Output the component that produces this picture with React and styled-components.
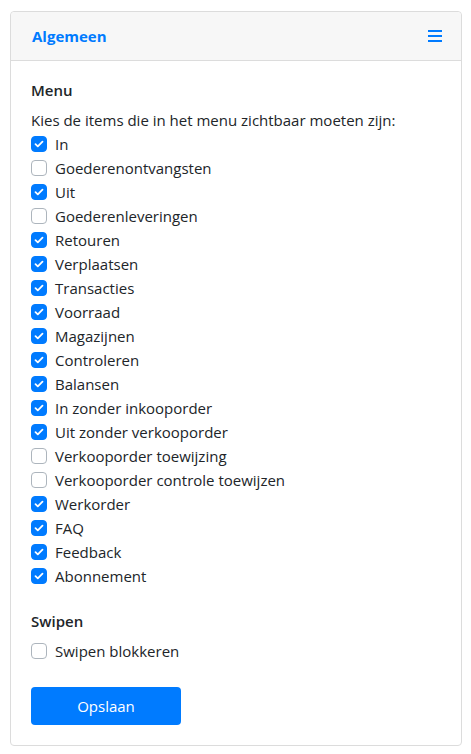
import styled, { createGlobalStyle } from "styled-components";

const GlobalStyle = createGlobalStyle`
    body {
        margin: 0;
        background: #fff;
        font-family: "Open Sans", "Liberation Sans", sans-serif;
        font-size: 15px;
        line-height: 24px;
        color: #212529;
    }
    * {
        box-sizing: border-box;
    }
`;

const Card = styled.div`
    margin: 11px 9px 0 10px;
    border: 1px solid #dcdcdc;
    border-radius: 4px;
    background: #fff;
`;

const CardHeader = styled.div`
    display: flex;
    align-items: center;
    justify-content: space-between;
    height: 49px;
    padding: 0 19px 0 21px;
    background: #f7f7f7;
    border-bottom: 1px solid #dcdcdc;
    border-radius: 4px 4px 0 0;
`;

const Title = styled.h5`
    margin: 0;
    font-size: 15px;
    font-weight: 700;
    color: #007bff;
`;

const MenuButton = styled.button`
    display: flex;
    background: none;
    border: 0;
    padding: 0;
    cursor: pointer;
`;

const CardBody = styled.div`
    padding: 20px;
`;

const SectionTitle = styled.h6`
    margin: ${(p) => (p.$spaced ? "24px" : "0")} 0 8px;
    font-size: 15px;
    font-weight: 600;
    line-height: 19px;
`;

const Text = styled.p`
    margin: 0;
`;

const CheckRow = styled.label`
    display: flex;
    align-items: center;
    gap: 8px;
    height: 24px;
    cursor: pointer;
`;

const Box = styled.span`
    display: flex;
    align-items: center;
    justify-content: center;
    width: 16px;
    height: 16px;
    border-radius: 4px;
    background: ${(p) => (p.$checked ? "#007bff" : "#fff")};
    border: 1px solid ${(p) => (p.$checked ? "#007bff" : "#adb5bd")};
`;

const SaveButton = styled.button`
    margin-top: 24px;
    width: 150px;
    height: 38px;
    border: 0;
    border-radius: 4px;
    background: #007bff;
    color: #fff;
    font-family: inherit;
    font-size: 15px;
    cursor: pointer;
`;

const items = [
    ["In", true],
    ["Goederenontvangsten", false],
    ["Uit", true],
    ["Goederenleveringen", false],
    ["Retouren", true],
    ["Verplaatsen", true],
    ["Transacties", true],
    ["Voorraad", true],
    ["Magazijnen", true],
    ["Controleren", true],
    ["Balansen", true],
    ["In zonder inkooporder", true],
    ["Uit zonder verkooporder", true],
    ["Verkooporder toewijzing", false],
    ["Verkooporder controle toewijzen", false],
    ["Werkorder", true],
    ["FAQ", true],
    ["Feedback", true],
    ["Abonnement", true],
];

const Check = ({ checked, label }) => (
    <CheckRow>
        <Box $checked={checked}>
            {checked && (
                <svg width="10" height="8" viewBox="0 0 10 8">
                    <path d="M1.5 4.2 L3.8 6.3 L8.5 1.6" fill="none" stroke="#fff" strokeWidth="1.8" strokeLinecap="round" strokeLinejoin="round" />
                </svg>
            )}
        </Box>
        {label}
    </CheckRow>
);

const App = () => {
    return (
        <>
            <GlobalStyle />
            <Card>
                <CardHeader>
                    <Title>Algemeen</Title>
                    <MenuButton>
                        <svg width="14" height="12" viewBox="0 0 14 12">
                            <rect x="0" y="0" width="14" height="2" fill="#007bff" />
                            <rect x="0" y="5" width="14" height="2" fill="#007bff" />
                            <rect x="0" y="10" width="14" height="2" fill="#007bff" />
                        </svg>
                    </MenuButton>
                </CardHeader>
                <CardBody>
                    <SectionTitle>Menu</SectionTitle>
                    <Text>Kies de items die in het menu zichtbaar moeten zijn:</Text>
                    {items.map(([label, checked]) => (
                        <Check key={label} label={label} checked={checked} />
                    ))}

                    <SectionTitle $spaced>Swipen</SectionTitle>
                    <Check label="Swipen blokkeren" checked={false} />

                    <SaveButton>Opslaan</SaveButton>
                </CardBody>
            </Card>
        </>
    );
};

export default App;
